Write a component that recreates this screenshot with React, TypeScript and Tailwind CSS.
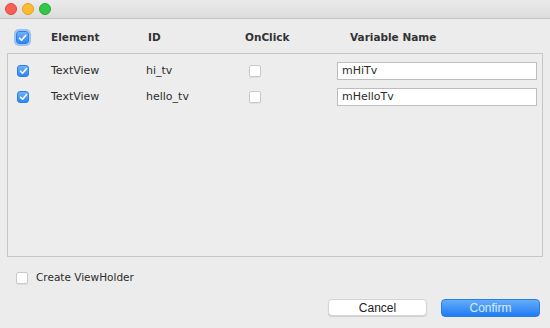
import React from "react";

function Check({ checked, focus, size = 13 }: { checked: boolean; focus?: boolean; size?: number }) {
  if (checked) {
    return (
      <div
        className={
          "flex items-center justify-center rounded-[3px] bg-gradient-to-b from-[#6cb1fa] to-[#2b85f6] border border-[#2f7fe6] " +
          (focus ? "shadow-[0_0_0_2px_rgba(90,160,245,0.55)]" : "")
        }
        style={{ width: size, height: size }}
      >
        <svg width="9" height="8" viewBox="0 0 9 8">
          <path d="M1.5 4.2 L3.6 6.3 L7.6 1.5" fill="none" stroke="white" strokeWidth="1.6" strokeLinecap="round" strokeLinejoin="round" />
        </svg>
      </div>
    );
  }
  return (
    <div
      className="rounded-[2px] bg-white border border-[#c9c9c9] shadow-[0_1px_1px_rgba(0,0,0,0.06)]"
      style={{ width: size, height: size }}
    />
  );
}

const rows = [
  { el: "TextView", id: "hi_tv", v: "mHiTv" },
  { el: "TextView", id: "hello_tv", v: "mHelloTv" },
];

export default function App() {
  return (
    <div
      className="w-[550px] h-[328px] bg-[#ececec] flex flex-col text-[#2a2a2a] overflow-hidden"
      style={{ fontFamily: '"DejaVu Sans", sans-serif' }}
    >
      {/* title bar */}
      <div className="h-[19px] shrink-0 bg-gradient-to-b from-[#ebebeb] to-[#dcdcdc] border-b border-[#c4c4c4] flex items-center gap-[5px] pl-[5px]">
        <div className="w-[12px] h-[12px] rounded-full bg-[#fc5f57] border border-[#e2463f]" />
        <div className="w-[12px] h-[12px] rounded-full bg-[#fdbc2e] border border-[#e0a028]" />
        <div className="w-[12px] h-[12px] rounded-full bg-[#33c748] border border-[#27aa35]" />
      </div>

      {/* header */}
      <div className="h-[34px] shrink-0 pl-[16px] pt-[3px] grid grid-cols-[35px_97px_97px_105px_1fr] items-center text-[10.5px] font-bold text-[#333]">
        <Check checked focus />
        <div>Element</div>
        <div>ID</div>
        <div>OnClick</div>
        <div>Variable Name</div>
      </div>

      {/* table panel */}
      <div className="mx-[7px] h-[204px] shrink-0 border border-[#c6c6c6] bg-[#ededed] pt-[8px] pl-[9px] flex flex-col gap-[8px]">
        {rows.map((r) => (
          <div key={r.id} className="grid grid-cols-[34px_95px_103px_88px_200px] items-center h-[18px] text-[11px] text-[#2d2d2d]">
            <Check checked size={12} />
            <div>{r.el}</div>
            <div>{r.id}</div>
            <Check checked={false} size={12} />
            <div className="h-[18px] bg-white border border-[#bdbdbd] flex items-center px-[4px]">{r.v}</div>
          </div>
        ))}
      </div>

      {/* create viewholder */}
      <div className="mt-[11px] h-[20px] shrink-0 pl-[16px] flex items-center gap-[8px] text-[10.5px] text-[#2d2d2d]">
        <Check checked={false} size={12} />
        <div>Create ViewHolder</div>
      </div>

      {/* buttons */}
      <div
        className="mt-[11px] flex justify-end gap-[14px] pr-[10px]"
        style={{ fontFamily: '"Liberation Sans", Arial, sans-serif' }}
      >
        <div className="w-[99px] h-[17px] bg-white rounded-[4px] border border-[#d4d4d4] shadow-[0_1px_1px_rgba(0,0,0,0.12)] flex items-center justify-center text-[12px] text-[#222]">
          Cancel
        </div>
        <div className="w-[99px] h-[18px] rounded-[4px] bg-gradient-to-b from-[#63acf9] to-[#1b7bf3] border border-[#2a7ee8] flex items-center justify-center text-[12px] text-[#dcecff]">
          Confirm
        </div>
      </div>
    </div>
  );
}
